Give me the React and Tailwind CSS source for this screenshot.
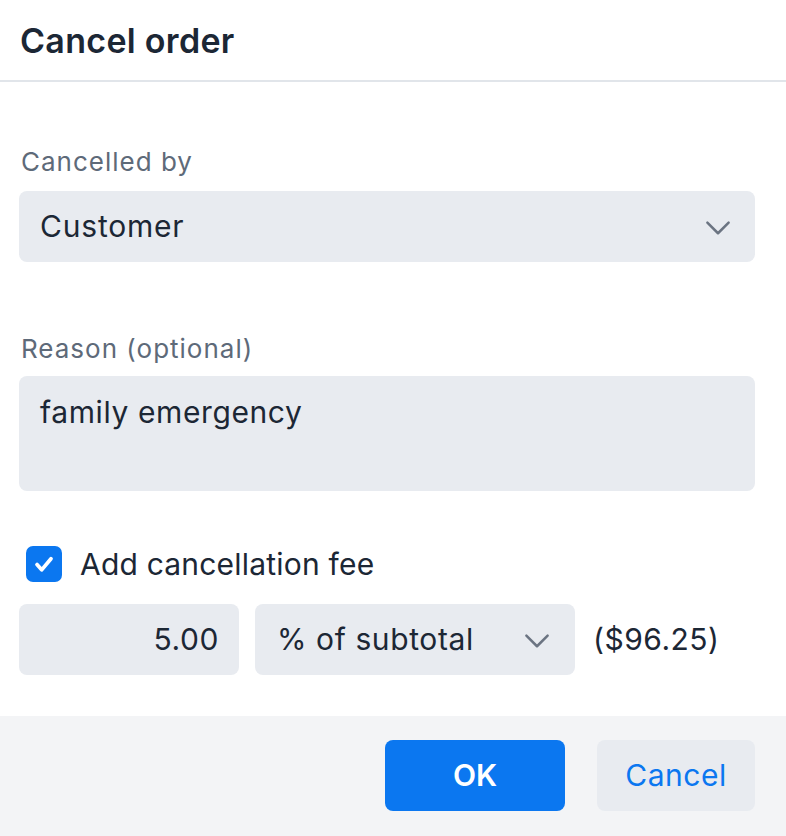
import { useState } from "react";

function Chevron({ className }) {
  return (
    <svg viewBox="0 0 24 24" className={className} fill="none" stroke="currentColor" strokeWidth="2" strokeLinecap="round" strokeLinejoin="round">
      <path d="M3.5 8.5l8.5 8.5 8.5-8.5" />
    </svg>
  );
}

export default function App() {
  const [fee, setFee] = useState(true);

  return (
    <div className="flex h-[836px] w-[786px] flex-col bg-white font-['Inter',sans-serif] text-[#1c2735]">
      <div className="flex h-[82px] items-center border-b-2 border-[#e1e5ea] px-[20px]">
        <h1 className="text-[34px] font-semibold tracking-[0.3px]">Cancel order</h1>
      </div>

      <div className="flex-1 pl-[19px] pr-[31px]">
        <label className="mt-[64px] mb-[13px] block px-[2px] text-[26px] leading-[32px] tracking-[1px] text-[#5e6a79]">
          Cancelled by
        </label>
        <div className="flex h-[71px] items-center justify-between rounded-[8px] bg-[#e8ebf0] pl-[21px] pr-[22px]">
          <span className="text-[30px] tracking-[0.8px]">Customer</span>
          <Chevron className="h-[30px] w-[30px] text-[#6b7482]" />
        </div>

        <label className="mt-[71px] mb-[11px] block px-[2px] text-[26px] leading-[32px] tracking-[1px] text-[#5e6a79]">
          Reason (optional)
        </label>
        <div className="h-[115px] rounded-[8px] bg-[#e8ebf0] px-[21px] pt-[18px]">
          <span className="text-[30px] leading-[36px] tracking-[0.6px]">family emergency</span>
        </div>

        <label className="mt-[55px] flex h-[36px] cursor-pointer items-center gap-[18px] pl-[7px]">
          <span
            onClick={() => setFee(!fee)}
            className="flex h-[36px] w-[36px] items-center justify-center rounded-[7px] bg-[#0b77f0]"
          >
            {fee && (
              <svg viewBox="0 0 24 24" className="h-[28px] w-[28px]" fill="none" stroke="white" strokeWidth="3.2" strokeLinecap="round" strokeLinejoin="round">
                <path d="M6 12.5l4 4.5L18 7.5" />
              </svg>
            )}
          </span>
          <span className="text-[30px] tracking-[0.2px]">Add cancellation fee</span>
        </label>

        <div className="mt-[22px] flex items-center">
          <div className="flex h-[71px] w-[220px] items-center justify-end rounded-[8px] bg-[#e8ebf0] pr-[20px]">
            <span className="text-[30px] tracking-[0.6px]">5.00</span>
          </div>
          <div className="ml-[16px] flex h-[71px] w-[320px] items-center justify-between rounded-[8px] bg-[#e8ebf0] pl-[22px] pr-[23px]">
            <span className="text-[30px] tracking-[0.6px]">% of subtotal</span>
            <Chevron className="h-[30px] w-[30px] text-[#6b7482]" />
          </div>
          <span className="ml-[18px] text-[30px] tracking-[0.5px]">($96.25)</span>
        </div>
      </div>

      <div className="flex h-[120px] items-start justify-end gap-[32px] bg-[#f3f4f6] pt-[24px] pr-[31px]">
        <button className="h-[71px] w-[180px] rounded-[8px] bg-[#0b77f0] text-[30px] font-semibold text-white">
          OK
        </button>
        <button className="h-[71px] w-[158px] rounded-[8px] bg-[#e8ebf0] text-[30px] tracking-[0.5px] text-[#0b77f0]">
          Cancel
        </button>
      </div>
    </div>
  );
}
